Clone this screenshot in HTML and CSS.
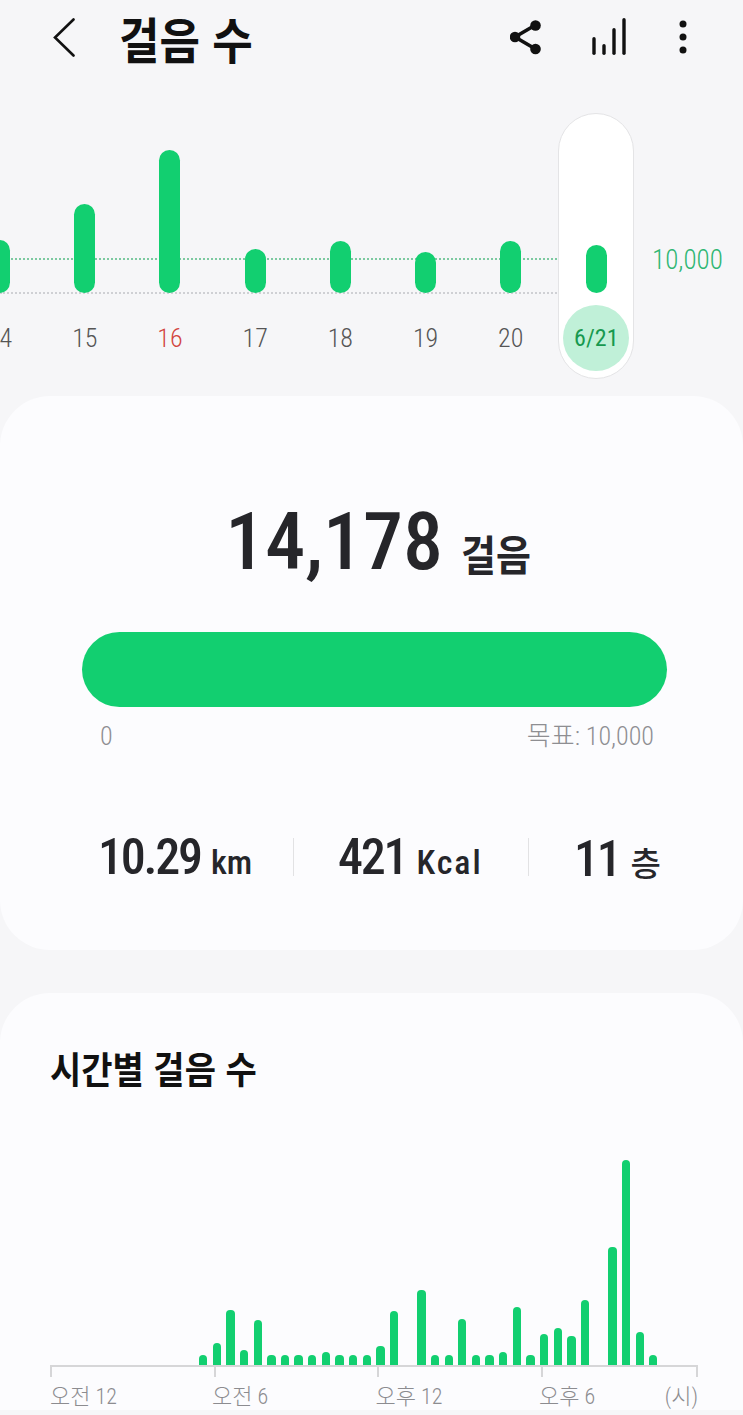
FILE: index.html
```html
<!DOCTYPE html>
<html lang="ko">
<head>
	<meta charset="UTF-8">
	<title>걸음 수</title>
	<link rel="stylesheet" href="styles.css">
</head>
<body>
	<div class="header">
		<svg class="back-icon" width="24" height="40" viewBox="0 0 24 40"><path d="M20.500 1.500 L2 19.500 L20.500 37.500" fill="none" stroke="#111" stroke-width="2.6" stroke-linecap="round"/></svg>
		<h1 class="title">걸음 수</h1>
		<svg class="share-icon" width="32" height="36" viewBox="0 0 32 36"><path d="M25.500 5 L5 17 L25.500 29" fill="none" stroke="#111" stroke-width="3.6"/><circle cx="25.500" cy="5.500" r="5.300" fill="#111"/><circle cx="5" cy="17" r="5.300" fill="#111"/><circle cx="25.500" cy="29" r="5.300" fill="#111"/></svg>
		<svg class="stats-icon" width="36" height="40" viewBox="0 0 36 40"><g fill="none" stroke="#111" stroke-width="3.4" stroke-linecap="round"><path d="M3 35.300 V20.700"/><path d="M13 35.300 V27.700"/><path d="M23 35.300 V11.700"/><path d="M33 35.300 V1.700"/></g></svg>
		<svg class="more-icon" width="10" height="36" viewBox="0 0 10 36"><circle cx="5" cy="4" r="3.500" fill="#111"/><circle cx="5" cy="17" r="3.500" fill="#111"/><circle cx="5" cy="30" r="3.500" fill="#111"/></svg>
	</div>

	<div class="week-chart">
		<div class="goal-line"></div>
		<div class="base-line"></div>
		<span class="goal-label">10,000</span>
		<div class="days">
			<div class="day"><div class="day-bar" style="height:53px"></div><span class="day-label">14</span></div>
			<div class="day"><div class="day-bar" style="height:89px"></div><span class="day-label">15</span></div>
			<div class="day"><div class="day-bar" style="height:143px"></div><span class="day-label sunday">16</span></div>
			<div class="day"><div class="day-bar" style="height:44px"></div><span class="day-label">17</span></div>
			<div class="day"><div class="day-bar" style="height:52px"></div><span class="day-label">18</span></div>
			<div class="day"><div class="day-bar" style="height:41px"></div><span class="day-label">19</span></div>
			<div class="day"><div class="day-bar" style="height:52px"></div><span class="day-label">20</span></div>
			<div class="day today"><div class="day-bar" style="height:48px"></div><span class="day-label">6/21</span></div>
		</div>
	</div>

	<div class="card summary">
		<div class="total"><span class="total-num">14,178</span><span class="total-unit">걸음</span></div>
		<div class="progress"></div>
		<div class="progress-labels"><span>0</span><span>목표: 10,000</span></div>
		<div class="stats">
			<div class="stat stat-km"><b>10.29</b><span>km</span></div>
			<div class="stat stat-kcal"><b>421</b><span>Kcal</span></div>
			<div class="stat stat-floor"><b>11</b><span>층</span></div>
		</div>
	</div>

	<div class="card hourly">
		<h2 class="hourly-title">시간별 걸음 수</h2>
		<div class="hour-bars">
			<i style="height:10px"></i><i style="height:22px"></i><i style="height:55px"></i><i style="height:15px"></i><i style="height:45px"></i>
			<i style="height:10px"></i><i style="height:10px"></i><i style="height:10px"></i><i style="height:10px"></i><i style="height:13px"></i>
			<i style="height:10px"></i><i style="height:10px"></i><i style="height:10px"></i><i style="height:19px"></i><i style="height:54px"></i>
			<i style="height:0"></i><i style="height:75px"></i><i style="height:10px"></i><i style="height:10px"></i><i style="height:46px"></i>
			<i style="height:10px"></i><i style="height:10px"></i><i style="height:13px"></i><i style="height:58px"></i><i style="height:10px"></i>
			<i style="height:31px"></i><i style="height:37px"></i><i style="height:29px"></i><i style="height:65px"></i><i style="height:0"></i>
			<i style="height:118px"></i><i style="height:205px"></i><i style="height:33px"></i><i style="height:10px"></i>
		</div>
		<div class="axis">
			<div class="axis-part"><span>오전 12</span></div>
			<div class="axis-part"><span>오전 6</span></div>
			<div class="axis-part"><span>오후 12</span></div>
			<div class="axis-part last"><span>오후 6</span><span>(시)</span></div>
		</div>
	</div>
</body>
</html>
```

FILE: styles.css
```css
* {
	margin: 0;
	padding: 0;
	box-sizing: border-box;
}

html,
body {
	height: 1415px;
	overflow: hidden;
}

body {
	background: #f6f6f8;
	font-family: "Roboto Condensed", "Roboto", "Noto Sans CJK KR", sans-serif;
	font-stretch: condensed;
}

/* header */
.header {
	height: 76px;
	display: flex;
	align-items: center;
	padding: 0 55px 0 53px;
}

.title {
	flex: 1;
	font-family: "Noto Sans CJK KR", sans-serif;
	font-size: 44px;
	font-weight: 700;
	color: #111;
	margin-left: 42px;
	line-height: 72px;
	white-space: nowrap;
	transform: scaleY(1.12);
}

.stats-icon {
	margin-left: 49px;
}

.more-icon {
	margin-left: 51px;
}

/* 7 day chart */
.week-chart {
	position: relative;
	height: 320px;
	padding-top: 37px;
	overflow: hidden;
}

.goal-line {
	position: absolute;
	left: 0;
	top: 182px;
	width: 560px;
	border-top: 2px dotted #7cc9a0;
}

.base-line {
	position: absolute;
	left: 0;
	top: 216px;
	width: 560px;
	border-top: 2px dotted #cfd0d4;
}

.goal-label {
	position: absolute;
	left: 652px;
	top: 167px;
	font-size: 27px;
	line-height: 34px;
	font-weight: 300;
	color: #2fb673;
}

.days {
	position: relative;
	display: flex;
	margin-left: -43px;
}

.day {
	width: 85.200px;
	height: 266px;
	display: flex;
	flex-direction: column;
	align-items: center;
	justify-content: flex-end;
}

.day-bar {
	width: 21px;
	border-radius: 11px;
	background: #12cf70;
}

.day-label {
	width: 66px;
	height: 66px;
	margin-top: 12px;
	margin-bottom: 8px;
	display: flex;
	align-items: center;
	justify-content: center;
	font-size: 26px;
	font-weight: 300;
	color: #555;
}

.sunday {
	color: #d2453f;
}

.today {
	width: 76px;
	margin-left: 5px;
	background: #fff;
	border: 1px solid #e4e4e6;
	border-radius: 38px;
}

.today .day-label {
	margin-bottom: 7px;
	border-radius: 50%;
	background: #c0f0d8;
	color: #17994f;
	font-size: 24px;
	font-weight: 400;
}

/* cards */
.card {
	background: #fcfcfe;
	border-radius: 50px;
}

.summary {
	height: 554px;
	padding-top: 106px;
}

.total {
	display: flex;
	justify-content: center;
	align-items: baseline;
	color: #26262a;
	height: 80px;
	margin-left: 13px;
}

.total-num {
	font-size: 80px;
	line-height: 80px;
	font-weight: 500;
}

.total-unit {
	font-family: "Noto Sans CJK KR", sans-serif;
	font-size: 38px;
	font-weight: 700;
	margin-left: 18px;
	transform: scaleY(1.12);
}

.progress {
	height: 75px;
	margin: 50px 76px 0 82px;
	border-radius: 38px;
	background: #12cf70;
}

.progress-labels {
	display: flex;
	justify-content: space-between;
	margin: 12px 89px 0 100px;
	font-size: 26px;
	font-weight: 300;
	line-height: 34px;
	color: #8e8e92;
}

.stats {
	display: flex;
	margin: 85px 0 0 98px;
	height: 44px;
	color: #26262a;
}

.stat {
	display: flex;
	align-items: baseline;
	height: 38px;
	white-space: nowrap;
}

.stat b {
	font-size: 50px;
	line-height: 38px;
	font-weight: 500;
	letter-spacing: -2.200px;
}

.stat span {
	font-size: 34px;
	font-weight: 500;
	margin-left: 10px;
}

.stat-km {
	width: 196px;
	border-right: 1px solid #e2e2e4;
}

.stat-kcal {
	width: 235px;
	padding-left: 44px;
	border-right: 1px solid #e2e2e4;
}

.stat-kcal span {
	letter-spacing: 2px;
}

.stat-floor {
	padding-left: 45px;
}

.stat-floor span {
	font-size: 33px;
	margin-left: 11px;
}

/* hourly chart */
.hourly {
	margin-top: 43px;
	height: 417px;
	border-radius: 50px 50px 0 0;
	padding: 53px 0 0 50px;
}

.hourly-title {
	font-family: "Noto Sans CJK KR", sans-serif;
	font-size: 34px;
	line-height: 46px;
	font-weight: 700;
	color: #111;
	transform: scaleY(1.1);
}

.hour-bars {
	height: 273px;
	padding-left: 149px;
	display: flex;
	align-items: flex-end;
	gap: 5.350px;
}

.hour-bars i {
	display: block;
	width: 8.300px;
	border-radius: 4px 4px 0 0;
	background: #12cf70;
}

.axis {
	display: flex;
	width: 648px;
}

.axis-part {
	width: 163.500px;
	height: 30px;
	border-top: 2px solid #d6d6d8;
	position: relative;
	font-size: 22px;
	font-weight: 300;
	color: #8c8c90;
	display: flex;
	justify-content: space-between;
	padding-top: 11px;
	white-space: nowrap;
}

.axis-part + .axis-part span:first-child {
	margin-left: -1.500px;
}

.axis-part::before {
	content: "";
	position: absolute;
	left: 0;
	top: 0;
	height: 10px;
	border-left: 2px solid #d6d6d8;
}

.last {
	width: 157.500px;
}

.last::after {
	content: "";
	position: absolute;
	right: 0;
	top: 0;
	height: 10px;
	border-left: 2px solid #d6d6d8;
}
```
